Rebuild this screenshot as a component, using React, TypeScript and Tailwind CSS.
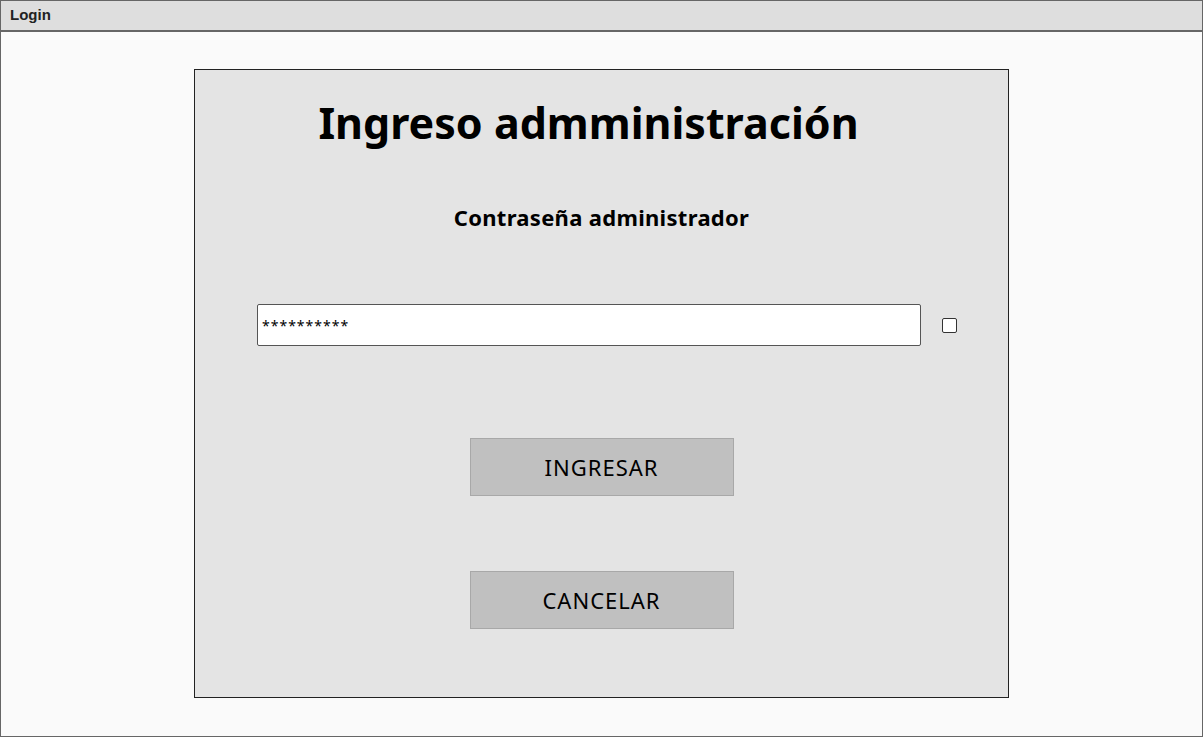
import React from "react";

const hand = { fontFamily: '"Comic Sans MS", "Noto Sans", "DejaVu Sans", sans-serif' };

const App = () => {
  return (
    <div className="w-[1203px] h-[737px] border border-[#666] bg-[#fafafa] flex flex-col overflow-hidden">
      {/* window title bar */}
      <div
        className="h-[31px] shrink-0 bg-[#dedede] border-b-2 border-[#666] px-[9px] flex items-center text-[15px] font-bold text-[#222]"
        style={{ fontFamily: '"Liberation Sans", Arial, sans-serif' }}
      >
        Login
      </div>

      {/* content */}
      <div className="flex-1 flex justify-center pt-[37px]">
        <div className="w-[815px] h-[629px] border border-[#222] bg-[#e4e4e4] flex flex-col" style={hand}>
          <h1 className="mt-[25px] pr-[26px] text-center text-[43px] leading-[56px] font-bold text-black">
            Ingreso admministración
          </h1>

          <p className="mt-[51px] text-center text-[22px] leading-[30px] font-bold tracking-[0.3px] text-black">
            Contraseña administrador
          </p>

          <div className="mt-[72px] ml-[62px] flex items-center gap-[21px]">
            <div className="w-[664px] h-[42px] bg-white border border-[#555] rounded-[2px] flex items-center px-[4px] text-[14px] tracking-[1px] text-black">
              **********
            </div>
            <div className="w-[15px] h-[15px] bg-white border border-[#333] rounded-[2px]" />
          </div>

          <div className="mt-[92px] flex flex-col items-center gap-[75px]">
            <button className="w-[264px] h-[58px] bg-[#c0c0c0] border border-[#a8a8a8] text-[22px] tracking-[1px] text-black">
              INGRESAR
            </button>
            <button className="w-[264px] h-[58px] bg-[#c0c0c0] border border-[#a8a8a8] text-[22px] tracking-[1px] text-black">
              CANCELAR
            </button>
          </div>
        </div>
      </div>
    </div>
  );
};

export default App;
